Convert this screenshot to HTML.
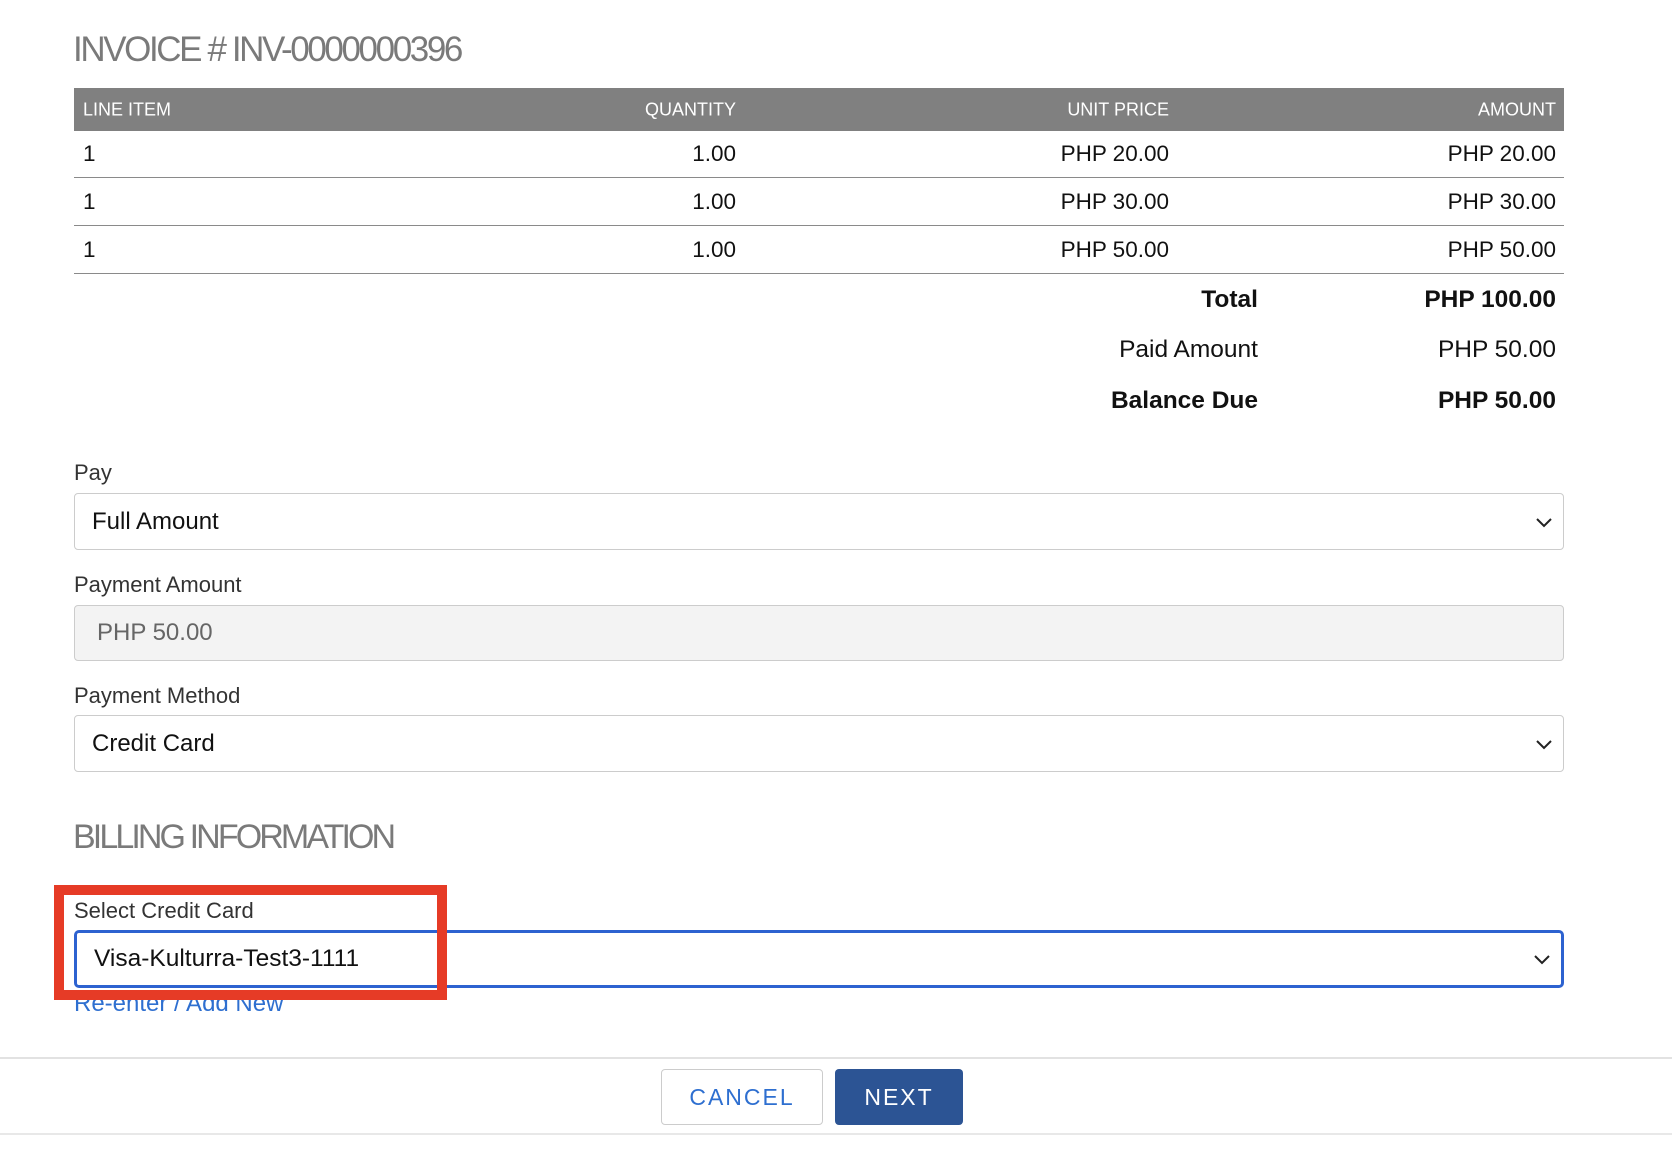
<!DOCTYPE html>
<html><head><meta charset="utf-8"><style>
*{box-sizing:border-box;margin:0;padding:0}
body{width:1672px;height:1164px;background:#fff;font-family:"Liberation Sans",Arial,sans-serif;position:relative;overflow:hidden;color:#111}
.a{position:absolute}
.title{font-size:35px;color:#7a7a7a;letter-spacing:-2.4px;font-weight:normal}
.hdr{left:74px;top:88px;width:1490px;height:43px;background:#808080;color:#fff;font-size:18px}
.hdr span,.row span{position:absolute;top:50%;transform:translateY(-50%)}
.row{left:74px;width:1490px;height:47px;border-bottom:1.5px solid #8a8a8a;font-size:22.5px}
.lbl{font-size:22px;color:#333;left:74px}
.sel{left:74px;width:1490px;height:57px;border:1px solid #ccc;border-radius:4px;font-size:24px;padding-left:17px;display:flex;align-items:center}
.chev{position:absolute;right:10px;top:50%;margin-top:-7px}
.tot{font-size:24.5px;text-align:right}
</style></head><body>
<div class="a title" style="left:73px;top:30px">INVOICE # INV-0000000396</div>
<div class="a hdr">
<span style="left:9px">LINE ITEM</span>
<span style="right:828px">QUANTITY</span>
<span style="right:395px">UNIT PRICE</span>
<span style="right:8px">AMOUNT</span>
</div>
<div class="a row" style="top:131px"><span style="left:9px">1</span><span style="right:828px">1.00</span><span style="right:395px">PHP 20.00</span><span style="right:8px">PHP 20.00</span></div>
<div class="a row" style="top:179px"><span style="left:9px">1</span><span style="right:828px">1.00</span><span style="right:395px">PHP 30.00</span><span style="right:8px">PHP 30.00</span></div>
<div class="a row" style="top:227px"><span style="left:9px">1</span><span style="right:828px">1.00</span><span style="right:395px">PHP 50.00</span><span style="right:8px">PHP 50.00</span></div>

<div class="a tot" style="right:414px;top:286px;font-weight:bold">Total</div>
<div class="a tot" style="right:116px;top:286px;font-weight:bold">PHP 100.00</div>
<div class="a tot" style="right:414px;top:336px">Paid Amount</div>
<div class="a tot" style="right:116px;top:336px">PHP 50.00</div>
<div class="a tot" style="right:414px;top:387px;font-weight:bold">Balance Due</div>
<div class="a tot" style="right:116px;top:387px;font-weight:bold">PHP 50.00</div>

<div class="a lbl" style="top:460px">Pay</div>
<div class="a sel" style="top:493px">Full Amount<svg class="chev" width="18" height="14" viewBox="0 0 18 14"><path d="M2 4 L9 11 L16 4" fill="none" stroke="#222" stroke-width="2"/></svg></div>
<div class="a lbl" style="top:572px">Payment Amount</div>
<div class="a sel" style="top:605px;height:56px;background:#f3f3f3;color:#666;padding-left:22px">PHP 50.00</div>
<div class="a lbl" style="top:683px">Payment Method</div>
<div class="a sel" style="top:715px">Credit Card<svg class="chev" width="18" height="14" viewBox="0 0 18 14"><path d="M2 4 L9 11 L16 4" fill="none" stroke="#222" stroke-width="2"/></svg></div>

<div class="a title" style="left:73px;top:818px;font-size:34px;letter-spacing:-2.9px">BILLING INFORMATION</div>
<div class="a lbl" style="top:898px">Select Credit Card</div>
<div class="a sel" style="top:930px;height:58px;border:3px solid #2d62d0;border-radius:5px;font-size:24.5px">Visa-Kulturra-Test3-1111<svg class="chev" width="18" height="14" viewBox="0 0 18 14"><path d="M2 4 L9 11 L16 4" fill="none" stroke="#222" stroke-width="2"/></svg></div>
<div class="a" style="left:74px;top:990px;font-size:24px;color:#2e6fd0">Re-enter / Add New</div>
<div class="a" style="left:54px;top:885px;width:393px;height:115px;border:10px solid #e63b26"></div>

<div class="a" style="left:0;top:1057px;width:1672px;height:2px;background:#e2e2e2"></div>
<div class="a" style="left:0;top:1133px;width:1672px;height:2px;background:#e8e8e8"></div>
<div class="a" style="left:661px;top:1069px;width:162px;height:56px;border:1.5px solid #ccc;border-radius:4px;color:#2e6fd0;font-size:23px;letter-spacing:2px;display:flex;align-items:center;justify-content:center">CANCEL</div>
<div class="a" style="left:835px;top:1069px;width:128px;height:56px;background:#2c5494;border-radius:4px;color:#fff;font-size:23px;letter-spacing:2px;display:flex;align-items:center;justify-content:center">NEXT</div>
</body></html>
